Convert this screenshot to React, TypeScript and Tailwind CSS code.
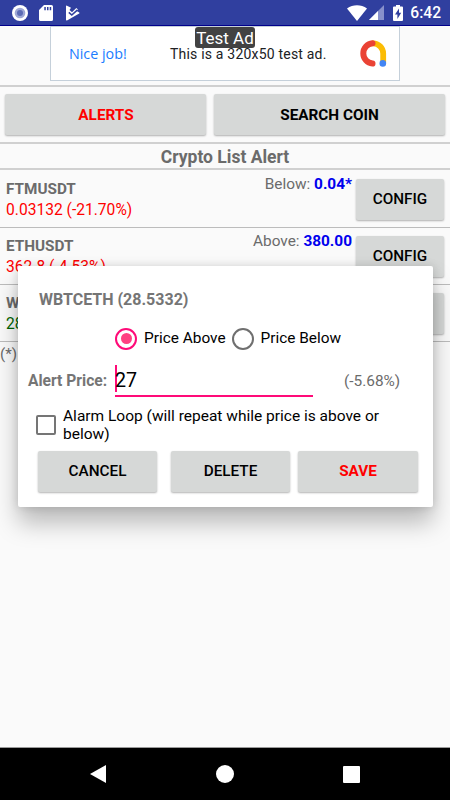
import { useState } from "react";
import clsx from "clsx";

type Alert = {
  symbol: string;
  price: string;
  up: boolean;
  label: string;
  target: string;
};

const ALERTS: Alert[] = [
  { symbol: "FTMUSDT", price: "0.03132 (-21.70%)", up: false, label: "Below:", target: "0.04*" },
  { symbol: "ETHUSDT", price: "362.8 (-4.53%)", up: false, label: "Above:", target: "380.00" },
  { symbol: "WBTCETH", price: "28.5332", up: true, label: "Above:", target: "27.00" },
];

const BUTTON =
  "h-[41px] rounded-[2px] bg-[#d6d8d7] text-[15.3px] leading-none shadow-[0_1px_2px_rgba(0,0,0,0.3)]";

function StatusBar() {
  return (
    <header className="flex h-[26px] items-center justify-between border-b border-[#00008b] bg-[#303f9f] pr-[9px] pl-3 text-white">
      <div className="flex items-center">
        <svg width="16" height="16" viewBox="0 0 16 16">
          <circle cx="8" cy="8" r="8" fill="#fff" />
          <circle cx="8" cy="8" r="5.3" fill="#9fa8d6" />
          <circle cx="8" cy="8" r="3" fill="#5c6bb5" />
        </svg>
        <svg className="ml-[11px]" width="14" height="16" viewBox="0 0 14 16" fill="#fff">
          <path d="M5 0h7.5A1.5 1.5 0 0 1 14 1.5v13a1.5 1.5 0 0 1-1.5 1.5h-11A1.5 1.5 0 0 1 0 14.5V5z" />
          <path d="M5.3 2h1.5v3.2H5.3zM8 2h1.5v3.2H8zM10.7 2h1.5v3.2h-1.5z" fill="#303f9f" />
        </svg>
        <svg className="ml-[13px]" width="14" height="16" viewBox="0 0 14 16" fill="#fff">
          <path d="M0 1.2Q0 .2 1 .7L5 2.8 3.500 5 6 7.300 10.300 3 12 4.500 10.800 6 13.200 7.400Q14 8 13.200 8.600L1 15.400Q0 15.700 0 14.800z" />
          <path d="M2.800 7.300L5.800 10 11.500 4.800" fill="none" stroke="#303f9f" strokeWidth="1.600" />
        </svg>
      </div>
      <div className="flex items-center">
        <svg width="20" height="16" viewBox="0 0 20 16" fill="#fff">
          <path d="M10 16L0 3.4C6-.9 14-.9 20 3.4z" />
        </svg>
        <svg className="ml-[2px]" width="15" height="15" viewBox="0 0 15 15">
          <path d="M0 15L15 0v15z" fill="#8891cb" />
          <path d="M0 15L9 6v9z" fill="#fff" />
        </svg>
        <svg className="ml-[9px]" width="10" height="16" viewBox="0 0 10 16">
          <path d="M3 1.5V0h4v1.5h2q1 0 1 1V15q0 1-1 1H1q-1 0-1-1V2.5q0-1 1-1z" fill="#fff" />
          <path d="M6 3.5L2 9.5h2.4V14L8.2 7.8H6z" fill="#303f9f" />
        </svg>
        <span className="ml-[7px] pt-[3px] text-[15.6px] leading-none font-medium">6:42</span>
      </div>
    </header>
  );
}

function AdBanner() {
  return (
    <div className="relative mx-auto flex h-[55px] w-[350px] items-center border border-[#c5d0da] bg-white">
      <span className="ml-[18px] w-[101px] font-['Open_Sans'] text-[14.3px] font-medium text-[#1a7cff]">
        Nice job!
      </span>
      <span className="pt-[2px] text-[14px] tracking-[0.2px] whitespace-nowrap text-[#202124]">
        This is a 320x50 test ad.
      </span>
      <svg className="ml-auto mr-[12px]" width="28" height="27" viewBox="0 0 28 27" fill="none" strokeLinecap="round">
        <path d="M14 3.400A10.200 10.200 0 0 1 24.200 13.600V23" stroke="#fbbc04" strokeWidth="5.800" />
        <path d="M13.500 3.300A10.200 10.200 0 0 0 13.500 23.600" stroke="#ea4335" strokeWidth="6" />
        <circle cx="23.800" cy="23.400" r="3.300" fill="#4285f4" />
      </svg>
      <span className="absolute top-0 left-[144px] h-[21px] w-[60px] rounded-[3px] bg-[#424242] text-center text-[17px] leading-[23px] text-white">
        Test Ad
      </span>
    </div>
  );
}

function AlertRow({ alert }: { alert: Alert }) {
  return (
    <div className="flex h-[57px] border-b border-[#bcbcbc] pr-[6px] pl-[6px]">
      <div className="flex-1 pt-[8px] text-[15.3px] leading-[21px]">
        <p className="font-bold text-[#6b6b6b]">{alert.symbol}</p>
        <p className={clsx("text-[15.6px]", alert.up ? "text-[#006400]" : "text-[#ff0000]")}>{alert.price}</p>
      </div>
      <p className="pt-[3px] pr-1 text-[15.4px] leading-5 text-[#6b6b6b]">
        {alert.label} <b className="text-[#0000ee]">{alert.target}</b>
      </p>
      <button className={clsx(BUTTON, "mt-[8px] w-[88px] font-medium")}>CONFIG</button>
    </div>
  );
}

function Radio({ label, checked, onSelect }: { label: string; checked: boolean; onSelect: () => void }) {
  return (
    <button className="flex items-center gap-[7px] text-[15.4px]" onClick={onSelect}>
      <span
        className={clsx(
          "flex size-[22px] items-center justify-center rounded-full border-2",
          checked ? "border-[#ff0a78]" : "border-[#6f6f6f]",
        )}
      >
        {checked && <span className="size-[11px] rounded-full bg-[#ff4081]" />}
      </span>
      {label}
    </button>
  );
}

function AlertDialog() {
  const [side, setSide] = useState("above");

  return (
    <div className="absolute top-[266px] left-[18px] h-[241px] w-[415px] rounded-[2px] bg-white text-black shadow-[0_16px_24px_rgba(0,0,0,0.26),0_0_10px_rgba(0,0,0,0.14)]">
      <h2 className="pt-[24px] pl-[21px] text-[16px] leading-5 font-bold text-[#757575]">WBTCETH (28.5332)</h2>

      <div className="mt-[17px] flex gap-[6px] pl-[97px]">
        <Radio label="Price Above" checked={side === "above"} onSelect={() => setSide("above")} />
        <Radio label="Price Below" checked={side === "below"} onSelect={() => setSide("below")} />
      </div>

      <div className="mt-[15px] flex h-[33px] pl-[10px]">
        <span className="w-[87px] pt-[6px] text-[15.6px] leading-5 font-bold text-[#757575]">Alert Price:</span>
        <div className="flex h-[32px] w-[198px] border-b-2 border-[#ff0a78]">
          <span className="-mr-[2px] h-[27px] w-[2px] bg-[#ff0a78]" />
          <span className="pt-[4px] text-[19.7px] leading-6">27</span>
        </div>
        <span className="ml-[31px] pt-[6px] text-[15.4px] leading-5 text-[#6b6b6b]">(-5.68%)</span>
      </div>

      <div className="mt-[9px] flex pl-[18px]">
        <span className="mt-[8px] size-[20px] shrink-0 rounded-[2px] border-2 border-[#757575]" />
        <p className="ml-[7px] text-[15.5px] leading-[18px]">
          Alarm Loop (will repeat while price is above or
          <br />
          below)
        </p>
      </div>

      <div className="mt-[8px] flex pl-[20px]">
        <button className={clsx(BUTTON, "w-[119px] font-medium")}>CANCEL</button>
        <button className={clsx(BUTTON, "ml-[14px] w-[119px] font-medium")}>DELETE</button>
        <button className={clsx(BUTTON, "ml-[8px] w-[120px] font-bold text-[#ff0000]")}>SAVE</button>
      </div>
    </div>
  );
}

export default function App() {
  return (
    <div className="relative flex h-[800px] w-[450px] flex-col overflow-hidden bg-[#fafafa] font-['Roboto',sans-serif]">
      <StatusBar />
      <AdBanner />

      <div className="mt-[4px] flex h-[59px] gap-2 border-y-2 border-[#d0d0d0] px-[5px] pt-[7px]">
        <button className={clsx(BUTTON, "w-[201px] pt-[2px] pl-px font-bold text-[#ff0000]")}>ALERTS</button>
        <button className={clsx(BUTTON, "flex-1 pt-[2px] font-bold")}>SEARCH COIN</button>
      </div>
      <h1 className="h-[26px] border-b-2 border-[#d0d0d0] text-center text-[17.5px] leading-[27px] font-bold text-[#6b6b6b]">
        Crypto List Alert
      </h1>

      <main className="flex-1 pt-px">
        {ALERTS.map((alert) => (
          <AlertRow key={alert.symbol} alert={alert} />
        ))}
        <p className="pt-[2px] text-[15.3px] leading-5 text-[#6b6b6b]">(*)</p>
      </main>

      <AlertDialog />

      <nav className="flex h-[53px] items-center justify-between border-t border-[#9a9a9a] bg-black pr-[90px] pl-[90px]">
        <svg width="16" height="18" viewBox="0 0 16 18" fill="#fff">
          <path d="M16 0v18L0 9z" />
        </svg>
        <span className="size-[18px] rounded-full bg-white" />
        <span className="size-[17px] rounded-[1px] bg-white" />
      </nav>
    </div>
  );
}
